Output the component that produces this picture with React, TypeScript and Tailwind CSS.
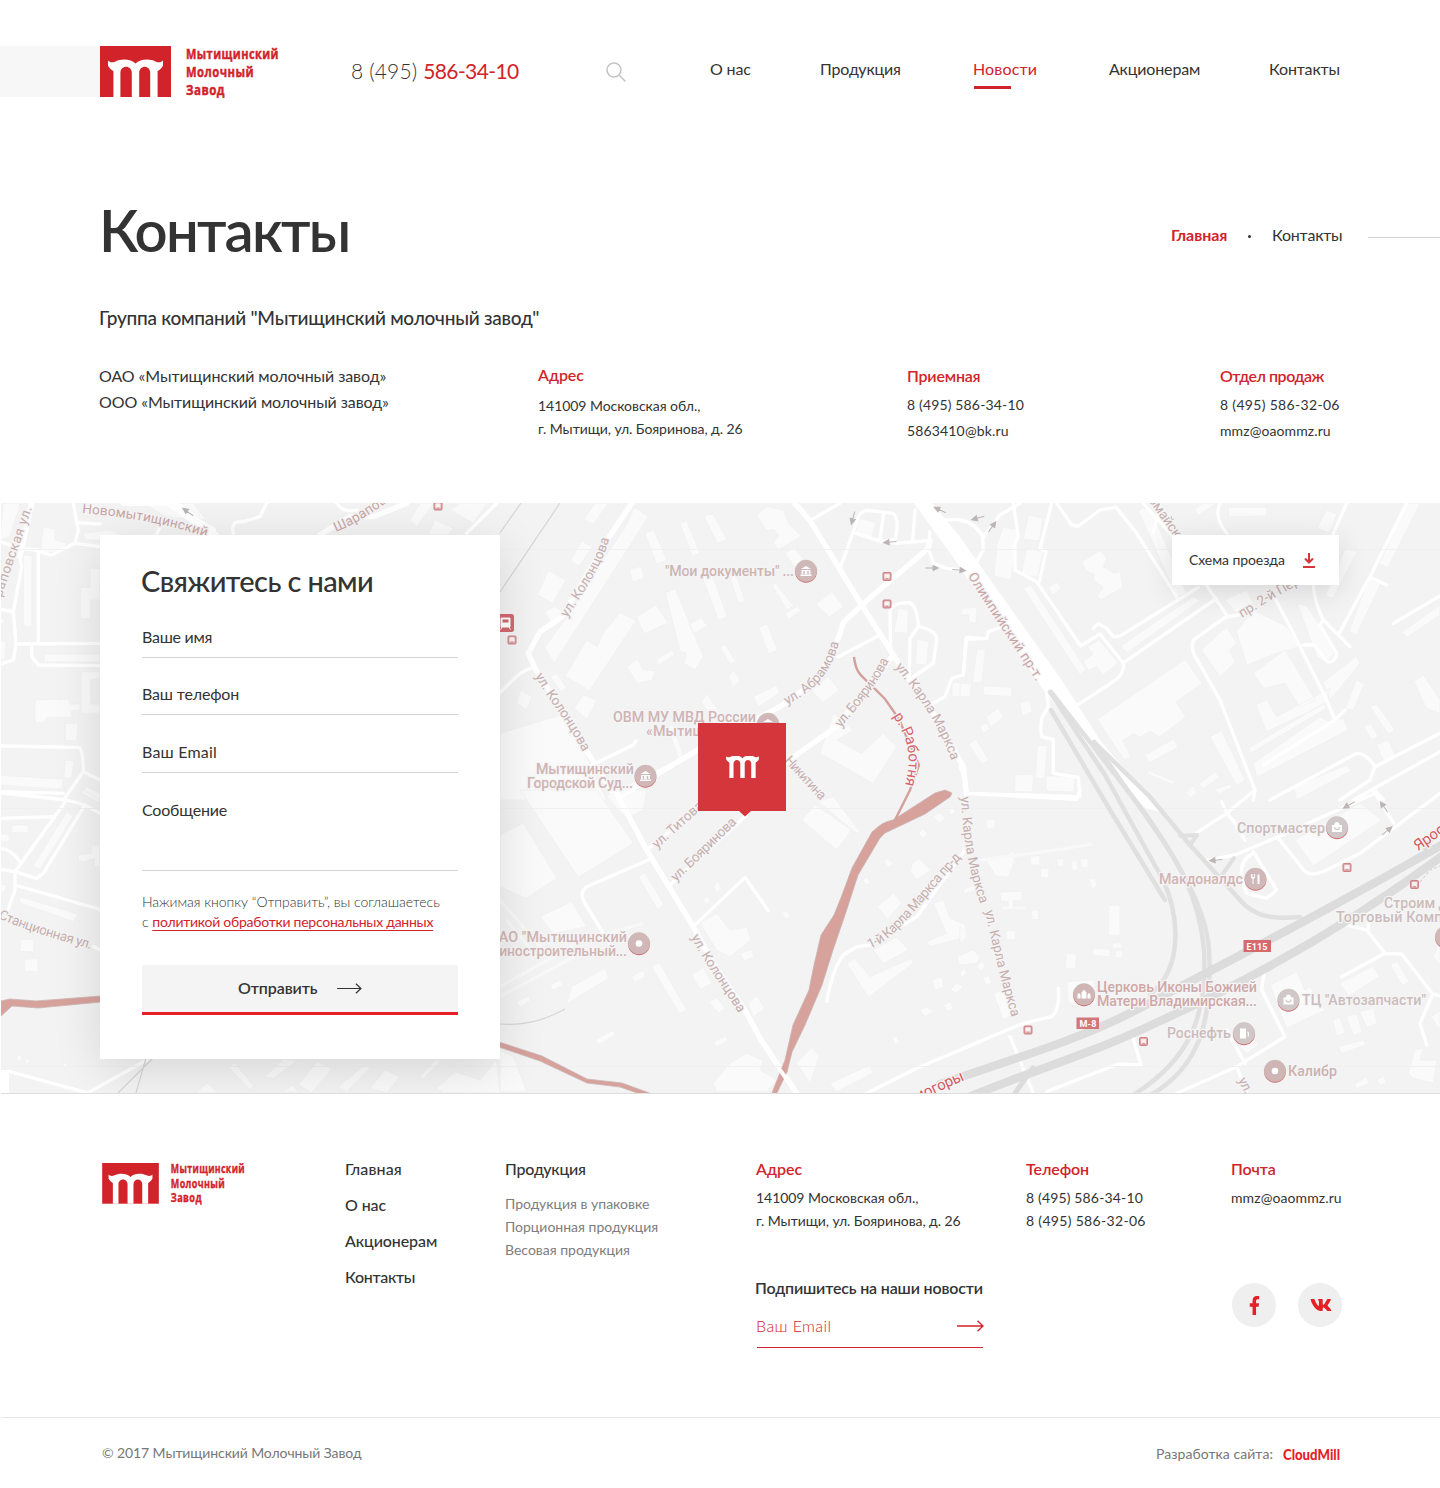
import React from "react";
import { FaFacebookF, FaVk } from "react-icons/fa";

const M_PATH =
  "M8 14.5C10 16.8 13 16.6 15.5 15.4C21 12.4 31 12.6 35.5 17.6C40 12.6 50 12.4 55.5 15.4C58 16.6 61 16.8 63 14.5V19.5C61.5 22.5 59.5 24 57.6 25V51H50.2V27C50.2 18.6 39.2 18.6 39.2 27V51H31.8V27C31.8 18.6 20.4 18.6 20.4 27V51H13.4V25C11.5 24 9.5 22.5 8 19.5Z";

function Logo({ className }: { className: string }) {
  return (
    <svg viewBox="0 0 180 52" className={className} role="img" aria-label="Мытищинский Молочный Завод">
      <rect width="71" height="51" fill="#d2232a" />
      <path d={M_PATH} fill="#fff" />
      <g
        fill="#d2232a"
        stroke="#d2232a"
        strokeWidth="0.45"
        fontFamily="'Open Sans', sans-serif"
        fontWeight="700"
        fontSize="14.5"
        letterSpacing="0.6"
      >
        <text x="86" y="12.6" textLength="93" lengthAdjust="spacingAndGlyphs">Мытищинский</text>
        <text x="86" y="31.4" textLength="68" lengthAdjust="spacingAndGlyphs">Молочный</text>
        <text x="86" y="48.7" textLength="39" lengthAdjust="spacingAndGlyphs">Завод</text>
      </g>
    </svg>
  );
}

function Arrow({ className }: { className: string }) {
  return (
    <svg viewBox="0 0 27 12" className={className} fill="none" stroke="currentColor" strokeWidth="1.3">
      <path d="M0 6H26M20.5 0.8L26 6L20.5 11.2" />
    </svg>
  );
}

/* Each map tile is drawn on its own grid, three units per pixel. */
type TileProps = {
  x: number;
  y: number;
  blocks?: string;
  roads?: string;
  wide?: string;
};

function Tile({ x, y, blocks, roads, wide }: TileProps) {
  return (
    <g transform={`translate(${x} ${y}) scale(0.33333)`}>
      {blocks && <path d={blocks} fill="#fafafa" stroke="#f0f0f0" strokeWidth="2" />}
      {wide && <path d={wide} fill="none" stroke="#fff" strokeWidth="16" strokeLinejoin="round" strokeLinecap="round" />}
      {roads && <path d={roads} fill="none" stroke="#fff" strokeWidth="10" strokeLinejoin="round" strokeLinecap="round" />}
    </g>
  );
}

type Street = { t: string; d: string; len: number; c?: string; s?: number };

const STREETS: Street[] = [
  { t: "ул. Колонцова", d: "M567 618C585 590 600 570 610 537", len: 90 },
  { t: "ул. Колонцова", d: "M535 676C548 700 568 722 584 754", len: 90 },
  { t: "ул. Абрамова", d: "M787 705C815 690 834 672 840 636", len: 84 },
  { t: "ул. Бояринова", d: "M841 728C856 708 875 690 890 658", len: 83 },
  { t: "ул. Карла Маркса", d: "M895 667C915 692 937 720 952 762", len: 110 },
  { t: "Никитина", d: "M784 761L822 802", len: 54 },
  { t: "ул. Титова", d: "M657 849L706 805", len: 63 },
  { t: "ул. Бояринова", d: "M676 882L739 821", len: 85 },
  { t: "ул. Колонцова", d: "M691 937C705 965 722 985 740 1016", len: 90 },
  { t: "1-й Карла Маркса пр-д", d: "M870 949C898 937 915 908 961 858", len: 130 },
  { t: "ул. Карла Маркса", d: "M961 797C962 830 968 870 981 906", len: 109 },
  { t: "ул. Карла Маркса", d: "M985 911C992 945 1001 980 1013 1022", len: 110 },
  { t: "Олимпийский пр-т.", d: "M968 576C985 605 1010 640 1036 681", len: 126, c: "#c9a5a5" },
  { t: "р. Работня", d: "M893 716C905 735 914 752 905 785", len: 73, c: "#d5666a", s: 15 },
  { t: "Новомытищинский", d: "M82 513C125 517 165 522 225 543", len: 127, c: "#c9a5a5" },
  { t: "Шараповская ул.", d: "M336 532C360 522 378 510 430 470", len: 112, c: "#c9a5a5" },
  { t: "Шараповская ул.", d: "M-5 618C8 575 22 540 33 504", len: 116 },
  { t: "Станционная ул.", d: "M-2 918C25 930 55 939 94 950", len: 98 },
  { t: "пр. 2-й Перекоп", d: "M1242 618C1262 606 1280 592 1330 570", len: 98 },
  { t: "Первомайский", d: "M1130 474L1186 554", len: 94 },
  { t: "ул. Лётная", d: "M1238 1080L1268 1140", len: 62 },
  { t: "Ярославское ш.", d: "M1418 851L1510 787", len: 110, c: "#d5565b", s: 15 },
  { t: "Холмогоры", d: "M892 1113Q930 1095 967 1079", len: 80, c: "#d5565b", s: 15 },
];

type Place = { t: string; x: number; y: number; w: number; c?: string };

const PLACES: Place[] = [
  { t: "\"Мои документы\" ...", x: 665, y: 576, w: 129 },
  { t: "ОВМ МУ МВД России", x: 613, y: 722, w: 143 },
  { t: "«Мытищ", x: 646, y: 736, w: 59 },
  { t: "Мытищинский", x: 536, y: 774, w: 98 },
  { t: "Городской Суд...", x: 527, y: 788, w: 106 },
  { t: "ОАО \"Мытищинский", x: 489, y: 942, w: 138 },
  { t: "машиностроительный...", x: 470, y: 956, w: 157 },
  { t: "Спортмастер", x: 1237, y: 833, w: 88, c: "#cbbcbc" },
  { t: "Макдоналдс", x: 1159, y: 884, w: 84 },
  { t: "Строим Дом", x: 1384, y: 908, w: 84, c: "#cbbcbc" },
  { t: "Торговый Комплекс", x: 1336, y: 922, w: 138, c: "#cbbcbc" },
  { t: "Церковь Иконы Божией", x: 1097, y: 992, w: 160, c: "#cfa8a8" },
  { t: "Матери Владимирская...", x: 1097, y: 1006, w: 160, c: "#cfa8a8" },
  { t: "ТЦ \"Автозапчасти\"", x: 1302, y: 1005, w: 124, c: "#cbbcbc" },
  { t: "Роснефть", x: 1167, y: 1038, w: 64, c: "#cbbcbc" },
  { t: "Калибр", x: 1288, y: 1076, w: 49, c: "#cdb0b0" },
];

const BANK = "M-5 -2L0 -5L5 -2ZM-4.5 -1H4.5V3H-4.5ZM-5.5 3.4H5.5V5H-5.5Z";
const BAG = "M-5 -2.5H5V4.5H-5ZM-2.6 -2.5C-2.6 -6.5 2.6 -6.5 2.6 -2.5";
const FORK = "M-4.5 -5V-1.5L-3 0V5H-2V0L-0.5 -1.5V-5H-1.5V-2H-3V-5ZM2 5V-4C3 -5 4 -5 4 -4V5Z";
const CHURCH = "M-6.5 4V0L-5 -1.5L-3.5 0V4ZM-2.5 4V-2L0 -5L2.5 -2V4ZM3.5 4V0L5 -1.5L6.5 0V4Z";
const PUMP = "M-4 5V-5H2V5ZM3 -2L5 -1V3H3.8V0Z";
const DOT = "M-3.3 0A3.3 3.3 0 1 0 3.3 0A3.3 3.3 0 1 0 -3.3 0Z";

const PINS: { x: number; y: number; d: string; c: string }[] = [
  { x: 806, y: 571, d: BANK, c: "#d0b8b8" },
  { x: 768, y: 724, d: BANK, c: "#d0b8b8" },
  { x: 645.5, y: 776, d: BANK, c: "#d0b8b8" },
  { x: 639, y: 943.5, d: DOT, c: "#d0b8b8" },
  { x: 1337, y: 827.5, d: BAG, c: "#d0c8c8" },
  { x: 1255.5, y: 879, d: FORK, c: "#d0b8b8" },
  { x: 1446, y: 937, d: BAG, c: "#d0b8b8" },
  { x: 1084, y: 994.5, d: CHURCH, c: "#d0b5b5" },
  { x: 1288.5, y: 1000, d: BAG, c: "#d0c8c8" },
  { x: 1244, y: 1033.5, d: PUMP, c: "#d0c8c8" },
  { x: 1275, y: 1071, d: DOT, c: "#d0b5b5" },
];

const STOPS: [number, number][] = [
  [887, 576.5],
  [887, 604],
  [512, 640],
  [438, 506],
  [1347, 867.5],
  [1414.5, 884.5],
  [1028, 1030],
  [1143.5, 1041.5],
];

const TURN_ARROWS: [number, number, number][] = [
  [853, 518, 105],
  [890, 542, 175],
  [932, 568, 0],
  [959, 570, 5],
  [940, 510, 205],
  [978, 518, 165],
  [992, 527, -55],
  [188, 512, 215],
  [1349, 805, 150],
  [1384, 807, 235],
  [1387, 831, -40],
  [1216, 860, 175],
];

function CityMap() {
  return (
    <svg viewBox="1 503 1439 590" className="block h-[590px] w-[1439px] bg-[#f3f3f3]" aria-hidden="true">
      <Tile
        x={500}
        y={500}
        blocks="M285 10L325 10L280 72L252 58ZM405 22L445 50L162 490L135 442L215 330L305 185L372 88ZM245 122L276 142L238 198L212 182ZM145 212L198 240L158 310L112 284ZM135 335L165 318L205 352L155 372ZM360 338L408 362L268 572L196 528L260 420L292 440L310 398ZM540 70L560 62L600 160L576 168ZM612 48L640 42L680 118L652 130ZM435 100L462 90L500 180L470 192ZM770 45L800 20L850 30L866 72L905 108L835 150L820 128L838 108L822 88L798 90ZM388 208L424 198L432 234L398 246ZM410 350L468 315L504 368L432 402ZM496 278L526 266L610 470L585 510L552 490L560 460L540 452ZM600 210L628 200L682 350L655 360ZM690 235L710 228L734 302L716 310ZM566 374L604 352L622 378L584 400ZM776 382L802 372L832 450L806 462ZM854 340L894 318L904 332L866 358ZM815 255L828 250L880 318L862 330ZM855 160L882 142L910 176L888 205ZM884 210L916 196L940 232L908 246ZM948 312L996 274L1030 320L988 350ZM660 440L676 434L708 486L690 492ZM380 500L412 478L430 510L466 512L456 540L412 550ZM468 480L516 450L524 464L478 494ZM62 570L96 590L80 630L50 610ZM152 530L170 520L200 564L182 574ZM250 585L290 600L262 658L222 625ZM760 590L830 555L838 580L775 620ZM935 570L985 530L1018 570L968 608ZM1195 325L1225 330L1222 400L1182 396ZM1252 418L1286 424L1280 496L1246 492ZM1380 325L1428 320L1428 370L1410 368L1408 345L1384 346ZM1356 548L1412 548L1412 592L1356 588ZM1080 55L1128 68L1115 112L1065 98ZM1000 640L1060 690L1010 720L1085 760L1150 700L1190 740L1120 850L960 760ZM0 700L200 640L320 900L0 900ZM505 680L520 676L550 770L536 780ZM620 580L660 640L640 660L605 606ZM700 510L720 540L700 560L686 530Z"
        roads="M0 578L60 520L100 500M1020 205L1060 95L1075 50Q1085 28 1110 32L1180 40Q1200 60 1185 118L1145 125L1060 98M1150 45L1140 120L1185 130L1290 122M930 62L1020 10M1245 30L1238 125M1290 95L1285 145L1300 190L1340 205L1400 212M1290 60L1350 60Q1400 50 1438 95M1172 460L1170 330Q1180 308 1230 308Q1252 320 1255 380L1230 415L1228 530M1255 380Q1310 390 1310 420L1300 490L1240 530M1172 440L1140 405L1015 470M1440 415L1400 412L1390 525L1355 535L1335 590L1290 615M265 800L400 735L408 722M350 880L560 770"
        wide="M395 10L325 115L185 352L120 395L85 460L105 505L265 760L345 890M885 10L930 62L1085 315L1180 465L1230 540L1300 640L1390 800L1400 890M1290 122L1285 145L1085 315L1030 368L1010 430L950 540L840 620L610 740L350 895M1180 465L1010 680L860 785"
      />
      <Tile
        x={960}
        y={500}
        blocks="M805 22L920 22L920 48L805 50ZM130 82L178 90L152 240L102 228L112 130ZM205 45L248 55L238 122L190 118ZM200 145L250 155L232 232L184 222ZM365 185L420 152L440 175L430 200L462 220L480 214L488 262L422 300L412 288L430 262L400 240L402 222L380 214ZM190 265L212 255L378 508L360 525ZM265 262L292 246L302 266L278 286ZM370 484L400 462L382 440L418 420L474 488L430 524L410 500L384 512ZM482 438L700 290L720 302L500 458ZM412 658L676 478L726 550L648 606L678 652L598 710L570 694L540 712L520 700L488 722L512 770L492 780ZM555 765L640 718L655 742L568 788ZM565 812L645 846L638 852L560 820ZM705 28L730 10L770 10L715 46ZM1100 30L1130 42L1108 100L1072 84ZM1340 10L1380 10L1284 202L1258 192ZM1155 145L1190 155L1118 296L1098 285ZM1225 235L1262 250L1190 404L1168 394ZM1328 395L1440 315L1440 345L1340 412ZM725 450L800 380L830 430L808 450L826 486L780 530ZM830 395L880 330L980 380L1020 440L950 460L860 495ZM880 520L975 450L1066 600L1020 622L975 550L910 565ZM888 615L920 600L950 650L1110 565L1100 610L920 695ZM865 745L1090 610L1100 625L875 758ZM880 790L1080 650L1100 662L1150 655L1164 690L890 832ZM1012 310L1040 318L1130 450L1100 490L1070 470ZM1090 545L1190 470L1200 490L1110 600ZM1190 540L1212 552L1180 632L1155 625ZM1230 620L1250 612L1305 690L1285 702ZM1212 680L1232 670L1254 708L1236 720ZM1250 735L1285 720L1308 770L1275 795ZM750 710L785 692L855 840L830 856ZM718 852L765 815L778 832L728 866ZM675 876L700 858L712 880L690 896ZM765 868L812 852L818 862L775 882ZM1000 860L1160 795L1175 812L1010 900ZM1362 545L1390 525L1440 600L1440 640L1400 625ZM50 450L76 446L66 545L38 550ZM70 558L156 562L154 590L70 584ZM0 550L34 552L30 590L0 590ZM78 650L115 625L132 652L92 680ZM180 610L208 600L216 636L186 648ZM60 680L78 668L90 688L70 700ZM25 732L48 718L86 780L66 792ZM232 735L262 738L254 836L226 834ZM165 825L220 822L218 876L164 874ZM258 828L346 828L342 876L258 872ZM5 325L50 322L48 370L28 365L26 345L6 344ZM535 30L570 20L680 280L650 290ZM795 300L860 270L880 310L830 340Z"
        roads="M0 60Q50 70 68 110L70 150L50 185M70 110L120 45L180 10M160 10L175 110L165 130L165 210L230 245L362 438L420 402L490 490Q495 520 460 545L345 620M275 10L240 145L258 155L238 245M400 385L415 370L440 385L460 410L480 408L715 262M495 485L770 295M290 10L335 75L355 78L420 30L468 22L530 100L650 290M580 100L600 10M550 10L640 110L800 345M780 10Q760 50 800 100M835 345L795 352L700 420Q690 450 715 485L780 600L850 780L885 870L880 900M1160 10L1120 100L1060 250Q1060 300 1090 360L1170 440M1340 10L1230 230L1135 405M1230 232L1280 255M1090 360L1080 375L1130 460Q1125 490 1100 485L1065 435L1030 435M940 285L1000 400L1100 600L1125 660L1155 630M1125 660L910 795M1300 370L1440 288M930 900L1190 760Q1220 760 1245 800L1230 840L1140 900M1245 800L1440 700M1180 900L1440 755M1240 875L1270 900M260 580L265 620L245 655Q240 690 245 710L280 718L280 820L355 832L360 890L20 880M130 380L85 395L80 415L18 418L10 525M0 800L18 840L20 895"
      />
      <Tile
        x={500}
        y={790}
        blocks="M10 130L70 100L170 265L78 325L0 290V140ZM60 0L290 0L400 160L235 262ZM120 380L215 335L260 410L160 430ZM415 260L435 248L492 345L472 358ZM320 20L350 0L440 0L430 60L380 85ZM215 590L315 535L325 565L200 642ZM150 585L180 570L188 586L158 600ZM50 635L85 618L92 632L60 650ZM395 560L430 540L436 560L405 578ZM455 530L478 518L560 660L538 670ZM575 555L610 532L634 580L600 598ZM628 636L650 624L676 655L655 670ZM745 640L770 618L795 655L760 680ZM600 400L650 370L690 420L740 412L752 450L690 500L650 480ZM640 290L655 272L664 300L650 308ZM610 330L624 318L630 334L618 342ZM720 490L755 480L762 500L732 514ZM905 90L945 45L1055 120L1010 180ZM955 35L1000 20L1080 125L1070 130ZM845 370L858 362L872 378L860 388ZM285 750L340 720L346 735L296 764ZM640 755L678 738L684 752L650 770ZM890 820L935 772L958 798L930 880L910 850ZM990 880L1110 825L1118 850L1010 905ZM1255 130L1270 118L1284 132L1270 145ZM1300 80L1320 66L1335 85L1318 98ZM1345 60L1360 48L1366 66L1352 76ZM1088 270L1100 262L1112 276L1100 286ZM1150 215L1162 204L1180 222L1165 232ZM1235 225L1255 205L1292 240L1250 270L1232 246ZM1132 350L1180 310L1205 340L1162 388ZM1040 520L1065 505L1110 560L1235 505L1240 520L1105 622ZM1120 480L1190 440L1225 480L1150 520ZM1300 340L1330 330L1350 385L1395 405L1402 440L1290 470L1280 455L1340 430ZM1372 500L1420 480L1440 500L1430 520L1378 525ZM1295 570L1325 560L1332 590L1305 600ZM1350 600L1370 578L1390 590L1368 610ZM1260 660L1280 650L1300 665L1275 680ZM1330 645L1350 635L1360 655L1345 665ZM1178 745L1190 738L1198 758L1184 764ZM640 880L690 820L740 790L790 812L780 840L830 870L800 905L650 905ZM0 780L40 800L80 905L0 905Z"
        roads="M355 25L400 0M440 180L600 50M510 285L740 75M580 410L735 262L805 362M980 635Q1000 530 1030 495L1070 470L1110 465L1250 380L1395 180M445 210L260 290Q235 310 255 340L340 480M1100 910L1250 835L1440 755"
        wide="M345 0L440 180L580 410L640 520L740 670L780 745L890 910"
      />
      <g transform="translate(500 790) scale(0.33333)" fill="none" stroke="#f8f8f8" strokeWidth="9">
        <path d="M0 590L240 455L430 400M0 620L260 480M20 390L110 500M0 330L130 480" />
      </g>
      <Tile
        x={960}
        y={790}
        blocks="M1005 150L1200 40L1265 90L1060 228ZM680 5L700 0L712 10L690 24ZM78 90L106 88L104 114L80 116ZM78 210L130 205L160 180L164 210L145 262L108 258ZM210 200L240 196L240 224L212 226ZM240 235L268 235L266 264L242 262ZM292 206L312 208L310 230L292 228ZM335 214L352 212L354 240L336 242ZM362 208L384 206L384 232L364 234ZM388 268L405 264L412 290L394 296ZM120 306L185 304L186 330L160 332V350L200 350V358L124 358V350L145 348V334L122 332ZM446 346L480 346L480 436L446 436ZM214 362L236 360L236 388L216 390ZM138 424L166 420L166 448L140 450ZM400 474L450 478L448 500L398 496ZM456 460L484 458L486 474L458 476ZM466 482L488 482L486 504L466 502ZM320 490L350 492L346 536L316 534ZM320 575L400 570L410 640L325 640ZM100 610L150 590L180 660L130 690ZM930 585L1010 545L1035 600L1050 590L1095 660L980 714ZM1140 580L1240 528L1258 560L1165 618ZM1290 525L1312 514L1348 575L1328 588ZM1118 690L1140 682L1155 730L1130 738ZM1160 680L1190 672L1208 728L1180 736ZM1200 665L1240 655L1252 700L1220 712ZM1135 770L1210 750L1218 765L1145 790ZM1412 680L1440 662L1440 720ZM1365 778L1390 775L1380 810L1430 810L1420 880L1360 865L1345 850ZM1185 882L1220 860L1228 880L1190 896ZM1250 870L1270 858L1280 878L1262 886ZM1420 500L1440 450L1440 525ZM840 770L880 740L895 765L862 790ZM10 420L20 440L0 460V410ZM10 300L40 285L48 300L12 312ZM0 545L15 535L22 552L2 562ZM50 525L68 515L78 530L60 542ZM70 565L88 555L95 580L78 586Z"
        roads="M20 10L350 28L360 0M710 128L800 70L885 0M785 35L800 68L825 100L855 150M735 212L825 195L955 140L1245 10L1300 98M955 145L1035 245Q1060 260 1100 240L1200 190L1440 10M1245 0L1270 30M880 185L950 300L920 325L860 310Q820 220 880 190M10 775L190 700L275 680Q300 660 295 595M150 740L220 910M515 730L543 825L475 822L260 905M650 910L830 830L975 740L905 600L915 530M830 830L860 905M800 720L855 820M1140 400L1220 420L1275 490L1145 560M1225 350L1225 420M1275 490L1325 492L1418 612L1380 700L1400 765M1418 612L1440 618"
      />
      <path d="M980 860C1020 855 1060 850 1092 844" fill="none" stroke="#f8f8f8" strokeWidth="3" />
      <Tile
        x={0}
        y={500}
        blocks="M130 80L165 88L165 120L200 130L190 152L120 162ZM250 100L330 90L400 120L255 120ZM70 165L96 168L95 380L70 378ZM242 262L270 262V205L300 205V300L272 300V356H242ZM0 355L15 360L0 380ZM0 420L18 425L14 480L0 480ZM132 462L300 462V486L132 486ZM245 515L300 515V535L272 540V612L300 612V640L245 640ZM105 600L208 598V612L240 612V630L215 632V652L138 652L136 666L105 668ZM196 670L234 670L230 724L196 720ZM195 780L222 782L214 836L192 832ZM0 826L190 838L185 868L0 855ZM255 858L300 880V900L250 885ZM0 120L10 10L60 10L30 110ZM1230 60L1260 10L1300 10L1250 82ZM1305 60L1360 85L1345 104L1285 104ZM1350 30L1380 10L1460 10L1420 70ZM430 10L580 10L620 60L500 50Z"
        roads="M0 125L60 145L115 150M220 10L235 90L225 130L155 165L100 150M235 68L300 72M115 150L115 430M60 175L65 200L40 335L0 328M40 335L48 432L40 480L0 492M48 432L300 430M95 435L95 470L115 495L300 497M225 130L300 140M0 738L235 742Q250 745 250 815L190 900M0 875L190 880M250 815L300 840M1010 10Q1030 40 1070 30M700 100Q690 60 730 65L780 50L800 10M480 80L470 104M1400 100L1490 10"
        wide="M95 10L60 170M370 10L500 10L640 90M960 104L1050 50L1120 50L1220 10"
      />
      <path d="M172 503L235 552" fill="none" stroke="#fff" strokeWidth="9" />
      <Tile
        x={0}
        y={790}
        blocks="M200 65L220 78L120 238L100 228ZM35 105L85 105V128L35 128ZM0 130L28 134V156L0 155ZM60 320L232 372L222 395L58 338ZM235 195L275 190V165L300 165V230H282V205L252 215L235 212ZM62 450L102 448L100 486L60 484ZM75 508L114 506V545L74 544ZM0 280L22 288L12 308L0 302ZM50 798L66 795L64 812L52 810ZM78 808L88 806L86 820L76 818ZM190 820L202 818L200 832L190 830ZM250 0L300 30V40L245 10ZM685 830L705 820L762 890L748 898ZM795 860L850 808L892 812L820 865ZM895 885L950 815L996 835L935 908ZM1015 890L1095 825L1110 835L1040 905ZM1110 895L1155 840L1200 860L1160 908ZM590 908L620 878L655 908ZM850 905L880 885L895 908ZM1258 862L1310 808L1320 815L1270 866ZM1310 895L1365 845L1440 870L1490 810L1500 908H1330Z"
        roads="M0 8L200 30L255 45L300 70M200 30L45 245L45 300L20 370M45 245L110 265L130 250L255 45M0 85L160 80M0 175Q30 175 60 215M0 238L45 245M45 285L300 358M280 470L300 478M30 845L260 908M270 905L440 810"
      />
      <path d="M1 1070H9V1093H1Z" fill="#fff" />
      <path d="M1 549.5H1440M1 808.5H1440M1 1066.5H1440" stroke="#efefef" strokeWidth="0.8" />

      <g fill="none" stroke="#d6d6d6" strokeWidth="1.2">
        <path d="M521 503L500 533M560 503L500 592M500 1024C530 1026 548 1018 565 1009M118 1093L153 1058M136 1093L146 1058" />
        <path d="M1420 882L1430 870L1440 866" strokeDasharray="3 2" />
      </g>

      <path d="M914 503L932 503L960 537L1065 685L1100 740L1160 812L1145 808L1088 745L1045 692L955 560Z" fill="#fff" />

      <g fill="none" stroke="#dcdcdc" strokeLinejoin="round" strokeLinecap="round">
        <path d="M1050 692L1105 775L1163 880C1177 910 1183 955 1160 985L1150 995" strokeWidth="4.5" stroke="#e0e0e0" />
        <path d="M1051 710L1110 810L1165 900" strokeWidth="4.5" stroke="#e0e0e0" />
        <path d="M1051 692L1135 800C1180 860 1200 900 1204 950C1207 1010 1195 1060 1125 1100" strokeWidth="4.5" stroke="#e0e0e0" />
        <path d="M1094 742L1130 794C1175 855 1206 905 1209 950C1213 1020 1200 1070 1145 1098" strokeWidth="4.5" stroke="#e0e0e0" />
        <path d="M1094 742L1150 797L1190 845L1240 900C1255 918 1275 919 1300 917" strokeWidth="4.5" stroke="#e0e0e0" />
        <path d="M1190 845L1197 835L1180 836M1234 858L1222 875" strokeWidth="4" stroke="#e0e0e0" />
        <path d="M940 1084C1010 1060 1080 1040 1140 1008C1230 960 1330 910 1450 840" strokeWidth="8.5" />
        <path d="M950 1105C1030 1070 1090 1055 1160 1021C1250 980 1350 925 1450 850" strokeWidth="8.5" />
        <path d="M1033 1068L1015 1093M1440 828L1425 848" strokeWidth="5" />
      </g>

      <g fill="#d7a19c" stroke="#c9b5b3" strokeWidth="0.8">
        <path d="M952 793L945 790L935 793L893 820C882 822 877 828 872 832L852 868L842 895L834 915L821 935L814 965L809 990L793 1025L785 1060L772 1093H777L787 1072L792 1052L805 1025L822 985L833 950L845 915L858 875L880 838L885 833L925 814L950 797Z" />
        <path d="M499 1042L542 1056L587 1079L622 1083L652 1094H640L620 1087L587 1083L540 1061L499 1047Z" />
        <path d="M1 1001L10 999L36 1001L101 996V1002L38 1008L12 1006L1 1016Z" />
      </g>
      <path d="M854 657C856 674 862 676 868 682L885 699L899 719L910 745L919 765L910 790L895 820" fill="none" stroke="#d3a09c" strokeWidth="2.4" />
      <path d="M780 1070L797 1093" stroke="#fff" strokeWidth="4" />

      <g fill="#bdb5b5" stroke="#bdb5b5">
        {TURN_ARROWS.map(([x, y, r]) => (
          <path key={`${x}-${y}`} d="M-6.5 0H2M1 -2.6L6.5 0L1 2.6Z" strokeWidth="1" transform={`translate(${x} ${y}) rotate(${r})`} />
        ))}
      </g>

      <g fontFamily="Roboto, sans-serif" stroke="#f5f5f5" strokeWidth="2.5" strokeLinejoin="round" paintOrder="stroke">
        {STREETS.map((s, i) => (
          <g key={i}>
            <path id={`street-${i}`} d={s.d} fill="none" stroke="none" />
            <text fill={s.c ?? "#c6aeae"} fontSize={s.s ?? 13.5}>
              <textPath href={`#street-${i}`} textLength={s.len}>
                {s.t}
              </textPath>
            </text>
          </g>
        ))}
        {PLACES.map((p) => (
          <text key={p.t} x={p.x} y={p.y} textLength={p.w} fontSize="14.3" fontWeight="500" fill={p.c ?? "#cfb4b4"}>
            {p.t}
          </text>
        ))}
      </g>

      {PINS.map((p) => (
        <g key={`${p.x}-${p.y}`} transform={`translate(${p.x} ${p.y})`}>
          <circle cy="0.9" r="10.8" fill="#d2676b" />
          <circle cy="-0.2" r="10.8" fill={p.c} stroke="#c9b8b8" strokeWidth="0.5" />
          <path d={p.d} fill="#fff" />
          {p.d === BAG && <path d="M-2.4 -0.5C-2.4 3 2.4 3 2.4 -0.5" fill="none" stroke={p.c} strokeWidth="1.2" />}
          {p.d === BANK && <path d="M-2 0V3M2 0V3" stroke={p.c} strokeWidth="1.4" />}
        </g>
      ))}

      {STOPS.map(([x, y]) => (
        <g key={`${x}-${y}`} transform={`translate(${x} ${y})`}>
          <rect x="-4" y="-4" width="8" height="8" rx="1" fill="#d9a0a2" stroke="#cf8285" strokeWidth="1" />
          <path d="M-2.2 -2.2H2.2V1H-2.2ZM-2 1V2.6M2 1V2.6" fill="#fbf3f3" stroke="#fbf3f3" strokeWidth="0.8" />
        </g>
      ))}
      <rect x="496" y="614" width="18" height="18" rx="2.5" fill="#d2696d" />
      <path d="M501 618H510V627H501ZM502 627L500.5 629.5M509 627L510.5 629.5" fill="#fff" stroke="#fff" />
      <path d="M502.5 619.5H508.5V622.5H502.5Z" fill="#d2696d" />
      <g fontFamily="Roboto, sans-serif" fontWeight="700" fontSize="9" fill="#fff">
        <rect x="1243.5" y="940" width="27.5" height="12" fill="#d5696d" />
        <text x="1246.5" y="949.5" textLength="21">E115</text>
        <rect x="1076.5" y="1017.5" width="22.5" height="11.5" fill="#d27679" />
        <text x="1079.5" y="1026.8" textLength="17">M-8</text>
      </g>
    </svg>
  );
}

function Field({ label, className }: { label: string; className: string }) {
  return (
    <input
      placeholder={label}
      className={`block w-full border-b border-[#d3d3d3] bg-transparent pb-[9px] text-base leading-6 outline-none placeholder:text-[#333] placeholder:opacity-100 ${className}`}
    />
  );
}

function ContactForm() {
  return (
    <form className="h-[524px] w-[400px] bg-white px-[42px] pt-[26px] shadow-[0_10px_45px_rgba(0,0,0,0.12)]">
      <h2 className="-ml-px text-[29px] leading-10 font-medium tracking-[-0.6px] whitespace-nowrap">Свяжитесь с нами</h2>
      <Field label="Ваше имя" className="h-[57px] pt-[23px] tracking-[-0.25px]" />
      <Field label="Ваш телефон" className="h-[57px] pt-[23px] tracking-[-0.15px]" />
      <Field label="Ваш Email" className="h-[58px] pt-6 tracking-[0.2px]" />
      <textarea
        placeholder="Сообщение"
        className="block h-[98px] w-full resize-none border-b border-[#d3d3d3] pt-[25px] text-base leading-6 tracking-[-0.2px] outline-none placeholder:text-[#333] placeholder:opacity-100"
      />
      <p className="mt-[21px] mb-[33px] text-sm leading-5 font-light tracking-[-0.04px] whitespace-nowrap">
        Нажимая кнопку “Отправить”, вы соглашаетесь
        <br />с{" "}
        <a className="font-normal tracking-[-0.25px] text-[#d2232a] underline decoration-1 underline-offset-[3px]">
          политикой обработки персональных данных
        </a>
      </p>
      <button
        type="button"
        className="flex h-[50px] w-full items-center border-b-3 border-[#e61e25] bg-[#f4f4f4] pl-24 text-base font-semibold tracking-[-0.1px] whitespace-nowrap"
      >
        <span className="-mt-px w-[99px] text-left">Отправить</span>
        <Arrow className="h-[11px] w-[25px]" />
      </button>
    </form>
  );
}

const NAV = ["О нас", "Продукция", "Новости", "Акционерам", "Контакты"];

export default function App() {
  return (
    <div className="h-[1488px] w-[1440px] overflow-hidden bg-white pt-[46px] font-['Lato',sans-serif] text-base tracking-normal text-[#333]">
      <header className="flex h-[51px]">
        <div className="w-[100px] bg-[#f7f7f7]" />
        <div className="w-[251px]">
          <Logo className="h-[52px] w-[180px]" />
        </div>
        <div className="w-[254px] pt-[11px] text-[21px] leading-7 font-light tracking-[0.15px] whitespace-nowrap">
          8 (495) <span className="font-normal tracking-[-0.6px] text-[#d2232a]">586-34-10</span>
        </div>
        <svg viewBox="0 0 20 20" className="mt-[15.5px] mr-[84.5px] ml-[0.5px] h-5 w-5" fill="none" stroke="#c4c4c4" strokeWidth="1.5">
          <circle cx="8" cy="8" r="7" />
          <path d="M13 13L19.5 19.5" />
        </svg>
        <nav className="grid grid-cols-[110px_153px_136px_160px_71px] pt-[11px] leading-6 tracking-[-0.15px]">
          {NAV.map((item) => (
            <a key={item} className={item === "Новости" ? "tracking-[0.15px] text-[#d2232a]" : ""}>
              {item}
              {item === "Новости" && <span className="mt-[5px] ml-px block h-[3px] w-[37px] bg-[#d2232a]" />}
            </a>
          ))}
        </nav>
      </header>

      <div className="mt-[91px] flex h-20 items-start justify-between pl-[99px]">
        <h1 className="mt-0.5 text-[58px] leading-[80px] font-semibold tracking-[-1.8px]">Контакты</h1>
        <div className="mt-[35px] flex leading-6 whitespace-nowrap">
          <a className="w-[77px] font-bold tracking-[-0.05px] text-[#d2232a]">Главная</a>
          <span className="mt-3 mr-[21px] h-[3px] w-[3px] rounded-full bg-[#333]" />
          <span className="w-[96px] tracking-[-0.2px]">Контакты</span>
          <span className="mt-[14px] h-px w-[72px] bg-[#d3d3d3]" />
        </div>
      </div>

      <h3 className="mt-[38px] pl-[99px] text-[19px] leading-6 font-medium tracking-[-0.26px]">
        Группа компаний "Мытищинский молочный завод"
      </h3>

      <section className="mt-[33px] grid h-[140px] grid-cols-[439px_369px_313px_220px] pl-[99px] whitespace-nowrap">
        <div className="leading-[26px] tracking-[-0.09px]">
          <p>ОАО «Мытищинский молочный завод»</p>
          <p>ООО «Мытищинский молочный завод»</p>
        </div>
        <div className="text-sm leading-[23px] tracking-[-0.05px]">
          <h4 className="mb-[7px] text-base leading-6 font-semibold tracking-[-0.1px] text-[#d2232a]">Адрес</h4>
          <p>141009 Московская обл.,</p>
          <p>г. Мытищи, ул. Бояринова, д. 26</p>
        </div>
        <div className="pt-px text-sm leading-[26px] tracking-[0.15px]">
          <h4 className="mb-1 text-base leading-6 font-semibold tracking-[-0.2px] text-[#d2232a]">Приемная</h4>
          <p>8 (495) 586-34-10</p>
          <p>5863410@bk.ru</p>
        </div>
        <div className="pt-px text-sm leading-[26px] tracking-[0.1px]">
          <h4 className="mb-1 text-base leading-6 font-semibold tracking-[-0.5px] text-[#d2232a]">Отдел продаж</h4>
          <p className="tracking-[0.32px]">8 (495) 586-32-06</p>
          <p>mmz@oaommz.ru</p>
        </div>
      </section>

      <section className="relative ml-px h-[591px] overflow-hidden border-b border-[#dedede]">
        <CityMap />
        <div className="absolute top-8 left-[99px]">
          <ContactForm />
        </div>
        <div className="absolute top-[220px] left-[697px]">
          <div className="flex h-[88px] w-[88px] items-center justify-center bg-[#d5363b]">
            <svg viewBox="8 14 55 37" className="h-[22px] w-[33px]">
              <path d={M_PATH} fill="#fff" />
            </svg>
          </div>
          <svg viewBox="0 0 12 6" className="ml-[41px] block h-[6px] w-3">
            <path d="M0 0H12L6 5.5Z" fill="#d5363b" />
          </svg>
        </div>
        <a className="absolute top-8 left-[1171px] flex h-[50px] w-[167px] items-center bg-white pl-[17px] text-sm tracking-[-0.07px] whitespace-nowrap shadow-[0_6px_30px_rgba(0,0,0,0.12)]">
          <span className="-mt-px w-[114px]">Схема проезда</span>
          <svg viewBox="0 0 12 15" className="h-[15px] w-3" fill="none" stroke="#d5363b" strokeWidth="2">
            <path d="M6 0V9.5M2 5.5L6 9.5L10 5.5M0 14H12" />
          </svg>
        </a>
      </section>

      <footer>
        <div className="grid h-[323px] grid-cols-[243px_160px_251px_270px_205px_120px] pt-[57px] pl-[102px] whitespace-nowrap">
          <div className="pt-3">
            <Logo className="h-[41.5px] w-[144px]" />
          </div>
          <div className="flex flex-col leading-9 font-medium tracking-[-0.1px]">
            <a className="tracking-[0.15px]">Главная</a>
            <a>О нас</a>
            <a>Акционерам</a>
            <a className="tracking-[-0.3px]">Контакты</a>
          </div>
          <div className="flex flex-col text-sm leading-[23px] text-[#7d7d7d]">
            <a className="mb-[5px] text-base leading-9 font-medium tracking-[-0.2px] text-[#333]">Продукция</a>
            <a>Продукция в упаковке</a>
            <a>Порционная продукция</a>
            <a>Весовая продукция</a>
          </div>
          <div className="text-sm leading-[23px] tracking-[-0.05px]">
            <h4 className="-mb-px text-base leading-9 font-semibold text-[#d2232a]">Адрес</h4>
            <p>141009 Московская обл.,</p>
            <p>г. Мытищи, ул. Бояринова, д. 26</p>
            <h4 className="mt-11 -ml-px text-base leading-6 font-semibold tracking-[-0.16px]">Подпишитесь на наши новости</h4>
            <div className="mt-[14px] ml-px flex h-[34px] w-[226px] items-start justify-between border-b border-[#d2232a] text-base leading-6 text-[#d2232a]">
              <span className="-ml-px font-light tracking-[0.4px]">Ваш Email</span>
              <Arrow className="mt-[6px] -mr-px h-3 w-[27px]" />
            </div>
          </div>
          <div className="text-sm leading-[23px] tracking-[0.15px]">
            <h4 className="-mb-px text-base leading-9 font-semibold tracking-[-0.1px] text-[#d2232a]">Телефон</h4>
            <p>8 (495) 586-34-10</p>
            <p className="tracking-[0.32px]">8 (495) 586-32-06</p>
          </div>
          <div className="text-sm leading-[23px] tracking-[0.1px]">
            <h4 className="-mb-px text-base leading-9 font-semibold tracking-[-0.1px] text-[#d2232a]">Почта</h4>
            <p>mmz@oaommz.ru</p>
            <div className="mt-[74px] ml-px flex gap-[22px] text-[#e61e25]">
              <a className="flex h-11 w-11 items-center justify-center rounded-full bg-[#efefef]">
                <FaFacebookF preserveAspectRatio="none" className="ml-px h-[19px] w-[11px]" />
              </a>
              <a className="flex h-11 w-11 items-center justify-center rounded-full bg-[#efefef]">
                <FaVk className="ml-px h-auto w-[22px]" />
              </a>
            </div>
          </div>
        </div>
        <div className="ml-px flex h-[71px] items-center justify-between border-t border-[#e6e6e6] pr-[99px] pl-[101px] text-sm text-[#777] whitespace-nowrap">
          <span className="tracking-[-0.1px]">© 2017 Мытищинский Молочный Завод</span>
          <span className="mt-0.5 flex items-center">
            <span className="w-[127px] tracking-[0.05px]">Разработка сайта:</span>
            <svg viewBox="0 0 58 14" className="h-[14px] w-[58px]" aria-label="CloudMill">
              <text
                x="0"
                y="12.5"
                fontFamily="Lato, sans-serif"
                fontWeight="900"
                fontSize="15.5"
                fill="#e61e25"
                textLength="57"
                lengthAdjust="spacingAndGlyphs"
              >
                CloudMill
              </text>
            </svg>
          </span>
        </div>
      </footer>
    </div>
  );
}
